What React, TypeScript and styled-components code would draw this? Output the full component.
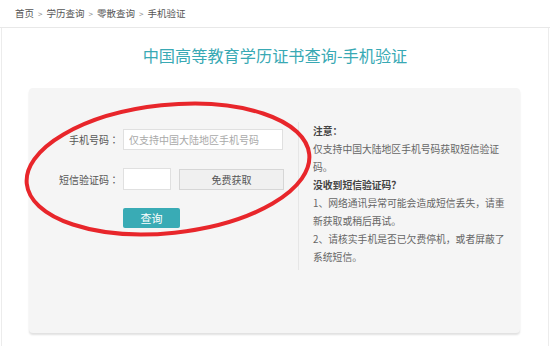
import React from 'react';
import styled, {createGlobalStyle} from 'styled-components';

const GlobalStyle = createGlobalStyle`
  html, body {
    margin: 0;
    padding: 0;
    background: #fff;
  }
  body {
    font-family: "Noto Sans CJK SC", "Noto Sans", sans-serif;
    color: #555;
  }
  * {
    box-sizing: border-box;
  }
`;

const Page = styled.div`
  position: relative;
  width: 550px;
  height: 346px;
  overflow: hidden;
`;

const Breadcrumb = styled.div`
  height: 28px;
  line-height: 26px;
  padding-left: 15px;
  font-size: 9.5px;
  color: #555;
  border-bottom: 1px solid #e8e8e8;
`;

const Sep = styled.span`
  margin: 0 4px;
  font-size: 8px;
  color: #888;
`;

const Main = styled.div`
  margin: 0 1px;
  height: 318px;
  border-left: 1px solid #ececec;
  border-right: 1px solid #ececec;
  padding-top: 16px;
`;

const Title = styled.h1`
  margin: 0;
  text-align: center;
  font-size: 16.2px;
  line-height: 22px;
  font-weight: 400;
  color: #39a9b4;
`;

const Card = styled.div`
  margin: 22px 28px 0 27px;
  height: 245px;
  background: #f5f5f5;
  border-radius: 4px;
  box-shadow: 0 2px 2px rgba(0, 0, 0, 0.12);
  display: flex;
  align-items: flex-start;
`;

const Form = styled.div`
  width: 269px;
  padding-top: 41px;
  display: flex;
  flex-direction: column;
  gap: 18px;
`;

const Row = styled.div`
  display: flex;
  align-items: center;
  gap: 8px;
`;

const Label = styled.label`
  width: 90px;
  margin-right: -4px;
  text-align: right;
  font-size: 10px;
  color: #555;
  white-space: nowrap;
`;

/* TC glyphs centre the full-width colon, like the reference */
const Colon = styled.span`
  font-family: "Noto Sans CJK TC", sans-serif;
`;

const Input = styled.input<{w: number; h: number}>`
  width: ${(p) => p.w}px;
  height: ${(p) => p.h}px;
  margin: 0;
  padding: 0 5px;
  border: 1px solid #e0e0e0;
  background: #fff;
  font-family: inherit;
  font-size: 10px;
  color: #555;
  outline: none;

  &::placeholder {
    color: #a9a9a9;
  }
`;

const CodeButton = styled.button`
  width: 105px;
  height: 21px;
  margin: 0;
  padding: 0;
  border: 1px solid #d6d6d6;
  background: #f0f0f0;
  font-family: inherit;
  font-size: 10px;
  color: #555;
`;

const SubmitButton = styled.button`
  margin-left: 94px;
  width: 57px;
  height: 20px;
  padding: 0;
  border: none;
  border-radius: 2px;
  background: #39abb5;
  font-family: inherit;
  font-size: 11px;
  color: #fff;
`;

const Notice = styled.div`
  margin-top: 34px;
  width: 213px;
  min-height: 148px;
  padding-left: 14px;
  border-left: 1px solid #e6e6e6;
  font-size: 9.8px;
  line-height: 18px;
  color: #666;
`;

const NoticeHead = styled.div`
  font-weight: 700;
  color: #444;
`;

const Ring = styled.svg`
  position: absolute;
  left: 0;
  top: 0;
  pointer-events: none;
`;

export default function App() {
  return (
    <Page>
      <GlobalStyle />
      <Breadcrumb>
        首页<Sep>&gt;</Sep>学历查询<Sep>&gt;</Sep>零散查询<Sep>&gt;</Sep>手机验证
      </Breadcrumb>
      <Main>
        <Title>中国高等教育学历证书查询-手机验证</Title>
        <Card>
          <Form>
            <Row>
              <Label>手机号码<Colon>：</Colon></Label>
              <Input w={160} h={21} placeholder="仅支持中国大陆地区手机号码" />
            </Row>
            <Row>
              <Label>短信验证码<Colon>：</Colon></Label>
              <Input w={48} h={22} />
              <CodeButton>免费获取</CodeButton>
            </Row>
            <SubmitButton>查询</SubmitButton>
          </Form>
          <Notice>
            <NoticeHead>注意：</NoticeHead>
            <div>仅支持中国大陆地区手机号码获取短信验证码。</div>
            <NoticeHead>没收到短信验证码？</NoticeHead>
            <div>1、网络通讯异常可能会造成短信丢失，请重新获取或稍后再试。</div>
            <div>2、请核实手机是否已欠费停机，或者屏蔽了系统短信。</div>
          </Notice>
        </Card>
      </Main>
      <Ring width="550" height="346" viewBox="0 0 550 346">
        <ellipse
          cx="168"
          cy="169"
          rx="142"
          ry="64"
          transform="rotate(-6 168 169)"
          fill="none"
          stroke="#e8262b"
          strokeWidth="4"
        />
      </Ring>
    </Page>
  );
}
